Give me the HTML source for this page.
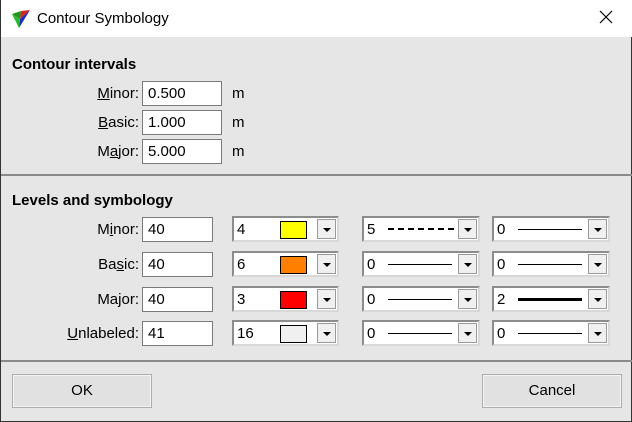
<!DOCTYPE html>
<html><head><style>
*{box-sizing:border-box;margin:0;padding:0}
body{width:632px;height:422px;overflow:hidden;font-family:"Liberation Sans",sans-serif;font-size:15px;color:#000;background:#e6e6e6}
.win{position:absolute;left:0;top:0;width:632px;height:422px;border:1px solid #333;border-top:none;background:#e6e6e6}
.title{position:absolute;left:0;top:0;width:631px;height:37px;background:#fff}
.title span{position:absolute;left:36px;top:10px;font-size:15px;color:#000}
.x{position:absolute;left:598px;top:10px}
.abs{position:absolute}
.h{font-weight:bold;font-size:15px}
.lbl{position:absolute;text-align:right;font-size:15px}
.in{position:absolute;background:#fff;border:1px solid #7a7a7a;height:25px;padding:3px 0 0 5px;font-size:15px}
.sep{position:absolute;left:0;width:631px;height:2px;background:#8a8a8a}
.cb{position:absolute;height:26px;background:#fff;border:2px solid;border-color:#8c8c8c #d8d8d8 #d8d8d8 #8c8c8c;}
.cb .t{position:absolute;left:3px;top:3px}
.cb .b{position:absolute;right:1px;top:1px;width:19px;height:20px;background:#f0f0f0;border:1px solid #9a9a9a}
.cb .b:after{content:"";position:absolute;left:5px;top:8px;border-left:4px solid transparent;border-right:4px solid transparent;border-top:4px solid #000}
.sw{position:absolute;left:46px;top:3px;width:27px;height:18px;border:1px solid #000}
.ln{position:absolute;height:0;border-top:1px solid #000;top:11px}
.btn{position:absolute;width:140px;height:34px;background:#e1e1e1;border:1px solid #adadad;box-shadow:inset 0 0 0 1px #f4f4f4;text-align:center;line-height:32px;font-size:15px}
u{text-decoration:underline}
</style></head><body>
<div class="win">
<div class="title">
<svg class="abs" style="left:10px;top:9px" width="20" height="20" viewBox="0 0 20 20">
<polygon points="1,5 10,2 9,10" fill="#1a9a1a"/><polygon points="10,2 19,1 9,10" fill="#e0201f"/><polygon points="19,1 9,10 8,19" fill="#1a2ad8"/><polygon points="1,5 9,10 8,19" fill="#20c020"/>
</svg>
<span>Contour Symbology</span>
<svg class="x" width="14" height="14" viewBox="0 0 14 14"><path d="M1 1L13 13M13 1L1 13" stroke="#000" stroke-width="1.2"/></svg>
</div>

<div class="abs h" style="left:11px;top:56px">Contour intervals</div>
<div class="lbl" style="left:50px;width:88px;top:85px"><u>M</u>inor:</div>
<div class="lbl" style="left:50px;width:88px;top:114px"><u>B</u>asic:</div>
<div class="lbl" style="left:50px;width:88px;top:143px">M<u>a</u>jor:</div>
<div class="in" style="left:141px;top:81px;width:80px">0.500</div>
<div class="in" style="left:141px;top:110px;width:80px">1.000</div>
<div class="in" style="left:141px;top:139px;width:80px">5.000</div>
<div class="abs" style="left:231px;top:85px">m</div>
<div class="abs" style="left:231px;top:114px">m</div>
<div class="abs" style="left:231px;top:143px">m</div>

<div class="sep" style="top:174px"></div>
<div class="abs h" style="left:11px;top:192px">Levels and symbology</div>

<div class="lbl" style="left:30px;width:108px;top:221px">M<u>i</u>nor:</div>
<div class="lbl" style="left:30px;width:108px;top:256px">Ba<u>s</u>ic:</div>
<div class="lbl" style="left:30px;width:108px;top:291px">Major:</div>
<div class="lbl" style="left:30px;width:108px;top:325px"><u>U</u>nlabeled:</div>
<div class="in" style="left:141px;top:217px;width:71px">40</div>
<div class="in" style="left:141px;top:252px;width:71px">40</div>
<div class="in" style="left:141px;top:287px;width:71px">40</div>
<div class="in" style="left:141px;top:321px;width:71px">41</div>

<div class="cb" style="left:231px;top:216px;width:107px"><span class="t">4</span><div class="sw" style="background:#ffff00"></div><div class="b"></div></div>
<div class="cb" style="left:361px;top:216px;width:118px"><span class="t">5</span><div class="ln" style="left:24px;width:66px;border-top:2px dashed #000;top:10px"></div><div class="b"></div></div>
<div class="cb" style="left:491px;top:216px;width:118px"><span class="t">0</span><div class="ln" style="left:24px;width:64px"></div><div class="b"></div></div>
<div class="cb" style="left:231px;top:251px;width:107px"><span class="t">6</span><div class="sw" style="background:#ff8000"></div><div class="b"></div></div>
<div class="cb" style="left:361px;top:251px;width:118px"><span class="t">0</span><div class="ln" style="left:24px;width:64px"></div><div class="b"></div></div>
<div class="cb" style="left:491px;top:251px;width:118px"><span class="t">0</span><div class="ln" style="left:24px;width:64px"></div><div class="b"></div></div>
<div class="cb" style="left:231px;top:286px;width:107px"><span class="t">3</span><div class="sw" style="background:#ff0000"></div><div class="b"></div></div>
<div class="cb" style="left:361px;top:286px;width:118px"><span class="t">0</span><div class="ln" style="left:24px;width:64px"></div><div class="b"></div></div>
<div class="cb" style="left:491px;top:286px;width:118px"><span class="t">2</span><div class="ln" style="left:24px;width:64px;border-top:3px solid #000;top:10px"></div><div class="b"></div></div>
<div class="cb" style="left:231px;top:320px;width:107px"><span class="t">16</span><div class="sw" style="background:#f0f0f0"></div><div class="b"></div></div>
<div class="cb" style="left:361px;top:320px;width:118px"><span class="t">0</span><div class="ln" style="left:24px;width:64px"></div><div class="b"></div></div>
<div class="cb" style="left:491px;top:320px;width:118px"><span class="t">0</span><div class="ln" style="left:24px;width:64px"></div><div class="b"></div></div>

<div class="sep" style="top:360px"></div>
<div class="btn" style="left:11px;top:374px">OK</div>
<div class="btn" style="left:481px;top:374px">Cancel</div>
</div>
</body></html>
